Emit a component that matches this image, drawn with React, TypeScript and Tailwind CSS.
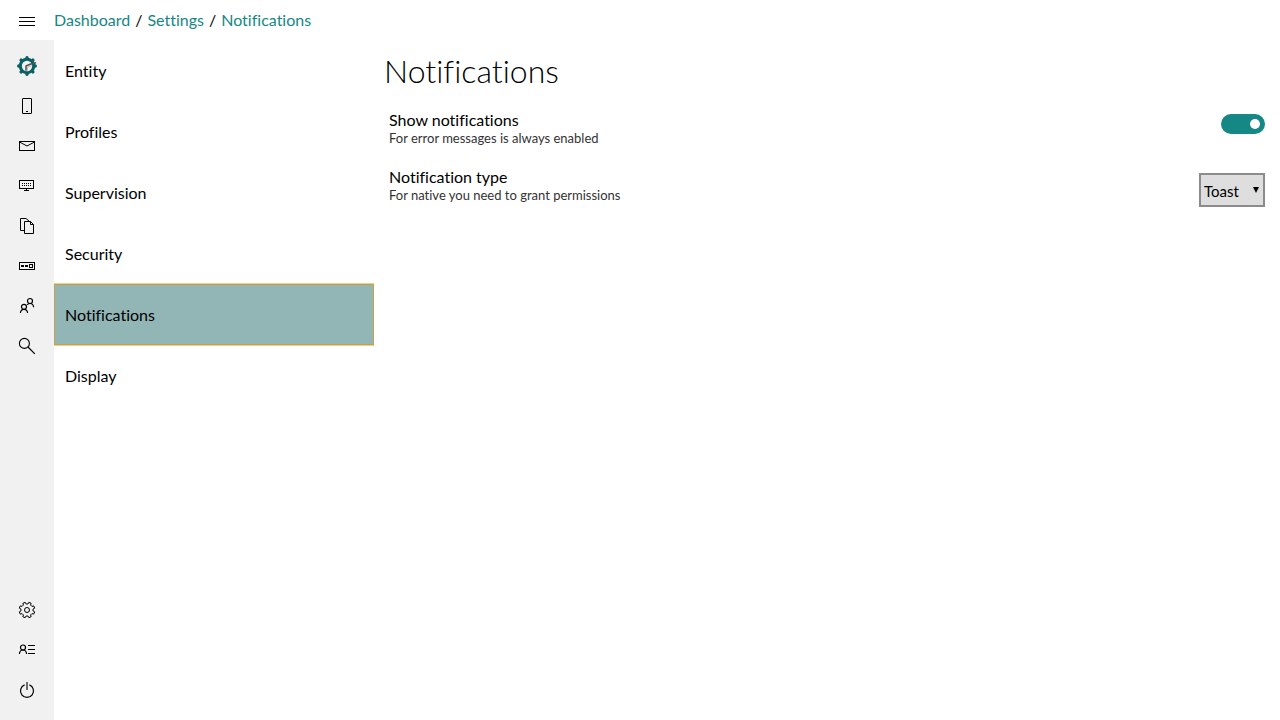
import { useState } from "react";
import type { ReactNode } from "react";

function Icon({ children }: { children: ReactNode }) {
  return (
    <svg viewBox="0 0 20 20" width="20" height="20" fill="none" stroke="#000" strokeWidth="1" aria-hidden="true">
      {children}
    </svg>
  );
}

function cog(teeth: number, outer: number, inner: number, base: number, tip: number) {
  const step = (2 * Math.PI) / teeth;
  const points: string[] = [];
  for (let i = 0; i < teeth; i++) {
    const a = (i + 0.5) * step - Math.PI / 2;
    [
      [-base, inner],
      [-tip, outer],
      [tip, outer],
      [base, inner],
    ].forEach(([t, r]) => {
      points.push(`${(10 + r * Math.cos(a + t * step)).toFixed(2)} ${(10 + r * Math.sin(a + t * step)).toFixed(2)}`);
    });
  }
  return `M${points.join("L")}Z`;
}

const mainNav = [
  {
    name: "Dashboard",
    icon: (
      <>
        <circle cx="10" cy="10" r="8.3" fill="#0b6064" stroke="none" />
        <path d="M10 1.7v16.6M1.7 10h16.6M4.1 4.1l11.8 11.8M15.9 4.1L4.1 15.9" stroke="#0b6064" strokeWidth="3.4" strokeLinecap="round" />
        <circle cx="10" cy="10" r="5.2" fill="#f2f2f2" stroke="none" />
        <path d="M9 14.8V10l4-1.7 6-1.6" stroke="#505050" strokeWidth="1.5" />
        <path d="M10.5 14.5v-3.3l4.3-1.6" stroke="#b5b5b5" />
      </>
    ),
  },
  {
    name: "Devices",
    icon: (
      <>
        <rect x="5.5" y="2.5" width="9" height="15" rx="0.3" />
        <path d="M9 15.5h2" />
      </>
    ),
  },
  {
    name: "Messages",
    icon: (
      <>
        <rect x="2.5" y="5.5" width="15" height="9" />
        <path d="M2.5 6l7.5 4 7.5-4" />
      </>
    ),
  },
  {
    name: "Terminals",
    icon: (
      <>
        <rect x="2.5" y="4.5" width="14" height="8" />
        <path d="M5 7.5h10M5 9.5h10" strokeDasharray="1 1" />
        <path d="M9.5 13v1M7 14.5h5" />
      </>
    ),
  },
  {
    name: "Files",
    icon: (
      <>
        <path d="M7 14.5H3.5v-12H9l3 2.5" />
        <path d="M7.5 5.5h6l3 3v9h-9zM13.5 5.5v3h3" />
      </>
    ),
  },
  {
    name: "Password",
    icon: (
      <>
        <rect x="2.5" y="6.5" width="15" height="7" />
        <path d="M4 10h3M8 10h3" strokeWidth="2" />
        <rect x="12.5" y="8.5" width="3" height="3" />
      </>
    ),
  },
  {
    name: "Users",
    icon: (
      <g strokeWidth="1.2">
        <circle cx="7" cy="10.8" r="2.5" />
        <path d="M3.4 17c.2-2.4 1.6-3.7 3.6-3.7s3.4 1.3 3.6 3.7" />
        <circle cx="13" cy="5" r="2.5" />
        <path d="M10.2 8.8c.7-.9 1.6-1.3 2.8-1.3 2 0 3.4 1.3 3.6 3.7" />
      </g>
    ),
  },
  {
    name: "Search",
    icon: (
      <>
        <circle cx="7.4" cy="7.4" r="5" strokeWidth="1.1" />
        <path d="M11 11l6.8 6.8" strokeWidth="1.2" />
      </>
    ),
  },
];

const footerNav = [
  {
    name: "Settings",
    icon: (
      <>
        <path d={cog(8, 7.9, 6.1, 0.3, 0.2)} strokeLinejoin="round" />
        <circle cx="10" cy="10" r="2.5" />
      </>
    ),
  },
  {
    name: "Account",
    icon: (
      <>
        <circle cx="6" cy="7.5" r="2.5" strokeWidth="1.2" />
        <path d="M2.4 14c.2-2.6 1.6-4 3.6-4s3.4 1.4 3.6 4" strokeWidth="1.2" />
        <path d="M11 5.5h7M11 9.5h7M11 13.5h7" />
      </>
    ),
  },
  {
    name: "Log out",
    icon: (
      <>
        <path d="M7.6 4.9a6.5 6.5 0 1 0 4.8 0" strokeWidth="1.2" />
        <path d="M10 2v8" strokeWidth="1.4" stroke="#333" />
      </>
    ),
  },
];

const sections = ["Entity", "Profiles", "Supervision", "Security", "Notifications", "Display"];

function NavButtons({ items }: { items: { name: string; icon: ReactNode }[] }) {
  return (
    <div className="flex flex-col">
      {items.map((item) => (
        <button key={item.name} type="button" aria-label={item.name} className="flex h-10 items-center justify-center">
          <Icon>{item.icon}</Icon>
        </button>
      ))}
    </div>
  );
}

export default function App() {
  const [selected, setSelected] = useState("Notifications");
  const [enabled, setEnabled] = useState(true);
  const [kind, setKind] = useState("Toast");

  return (
    <div className="flex min-h-screen flex-col bg-white font-['Lato','Noto_Sans',sans-serif] text-[16px] leading-5 text-black [font-variant-ligatures:none]">
      <header className="flex h-10 items-center">
        <button type="button" aria-label="Menu" className="flex h-10 w-[54px] items-center justify-center">
          <Icon>
            <path d="M2 7.5h16M2 11.5h16M2 15.5h16" />
          </Icon>
        </button>
        <nav aria-label="Breadcrumb" className="flex gap-[5px]">
          <a href="#dashboard" className="text-[#158784]">Dashboard</a>
          <span>/</span>
          <a href="#settings" className="text-[#158784]">Settings</a>
          <span>/</span>
          <a href="#notifications" className="text-[#158784]">Notifications</a>
        </nav>
      </header>

      <div className="flex flex-1">
        <nav aria-label="Main" className="flex w-[54px] shrink-0 flex-col justify-between bg-[#f1f1f1] pt-1.5 pb-2.5">
          <NavButtons items={mainNav} />
          <NavButtons items={footerNav} />
        </nav>

        <nav aria-label="Settings sections" className="flex w-80 shrink-0 flex-col">
          {sections.map((section) => (
            <button
              key={section}
              type="button"
              onClick={() => setSelected(section)}
              className={
                section === selected
                  ? "h-[61px] border border-[#c6a04a] bg-[#92b5b5] px-2.5 text-left shadow-[0_-1px_0_#ecd08f,0_1px_0_#ecd08f]"
                  : "h-[61px] border border-transparent px-2.5 text-left"
              }
            >
              {section}
            </button>
          ))}
        </nav>

        <main className="min-w-0 flex-1 pt-[7px] pr-[15px] pl-2.5">
          <h1 className="text-[32px] leading-[48px] font-light">Notifications</h1>
          <div className="flex flex-col gap-5 pt-4 pl-[5px]">
            <div className="flex items-start justify-between">
              <label htmlFor="show" className="flex flex-col">
                <span className="leading-[18px]">Show notifications</span>
                <span className="text-[13px] leading-[19px] text-[#333]">For error messages is always enabled</span>
              </label>
              <input
                id="show"
                type="checkbox"
                role="switch"
                checked={enabled}
                onChange={(e) => setEnabled(e.target.checked)}
                className="mt-[3px] flex h-5 w-11 appearance-none items-center rounded-full bg-[#8a8a8a] px-[5px] before:size-2.5 before:rounded-full before:bg-white checked:justify-end checked:bg-[#158784]"
              />
            </div>
            <div className="flex items-start justify-between">
              <label htmlFor="kind" className="flex flex-col">
                <span className="leading-[18px]">Notification type</span>
                <span className="text-[13px] leading-[19px] text-[#333]">For native you need to grant permissions</span>
              </label>
              <div className="relative mt-[5px]">
                <select
                  id="kind"
                  value={kind}
                  onChange={(e) => setKind(e.target.value)}
                  className="block h-[34px] w-[66px] appearance-none border-2 border-[#8c8c8c] bg-[#dedede] pt-px pl-[3px] text-[15px]"
                >
                  <option>Toast</option>
                  <option>Native</option>
                </select>
                <svg viewBox="0 0 6 6" width="6" height="6" className="pointer-events-none absolute top-3.5 right-1.5" aria-hidden="true">
                  <path d="M0 0h6L3 6z" />
                </svg>
              </div>
            </div>
          </div>
        </main>
      </div>
    </div>
  );
}
